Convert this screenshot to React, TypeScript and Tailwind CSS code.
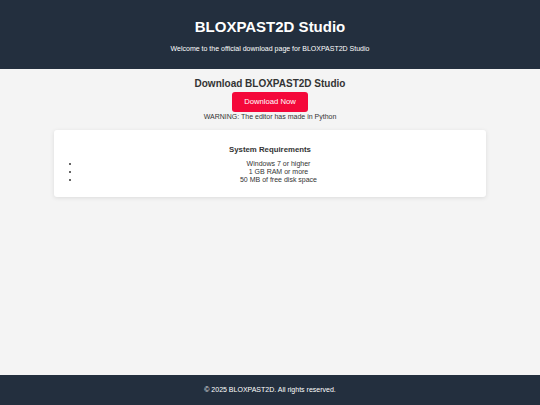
import React from "react";

export default function App() {
  return (
    <div
      className="min-h-screen flex flex-col bg-[#f4f4f4] text-[#333]"
      style={{ fontFamily: '"Liberation Sans", Arial, sans-serif' }}
    >
      <header className="h-[69px] bg-[#232f3e] text-white flex flex-col items-center pt-[18px]">
        <h1 className="text-[15px] leading-[18px] font-bold">BLOXPAST2D Studio</h1>
        <p className="text-[7px] leading-[8px] mt-[9px]">
          Welcome to the official download page for BLOXPAST2D Studio
        </p>
      </header>
      <main className="flex-1 flex flex-col items-center">
        <h2 className="text-[10px] leading-[12px] font-bold mt-[8.5px]">
          Download BLOXPAST2D Studio
        </h2>
        <button className="mt-[2.5px] w-[76px] h-[20px] rounded-[3px] bg-[#f4083a] text-white text-[7.7px] leading-[20px]">
          Download Now
        </button>
        <p className="text-[7px] leading-[8px] mt-[1px]">
          WARNING: The editor has made in Python
        </p>
        <section className="mt-[9px] w-[432px] bg-white rounded-[3px] shadow-[0_1px_4px_rgba(0,0,0,0.1)] px-[9px] pt-[14.5px] pb-[13px] text-center">
          <h3 className="text-[7.8px] leading-[9px] font-bold">System Requirements</h3>
          <ul className="mt-[6.5px] list-disc pl-[17px] text-[7px] leading-[8px]">
            <li>Windows 7 or higher</li>
            <li>1 GB RAM or more</li>
            <li>50 MB of free disk space</li>
          </ul>
        </section>
      </main>
      <footer className="h-[30px] bg-[#232f3e] text-white flex items-center justify-center">
        <p className="text-[7px] leading-[8px]">© 2025 BLOXPAST2D. All rights reserved.</p>
      </footer>
    </div>
  );
}
